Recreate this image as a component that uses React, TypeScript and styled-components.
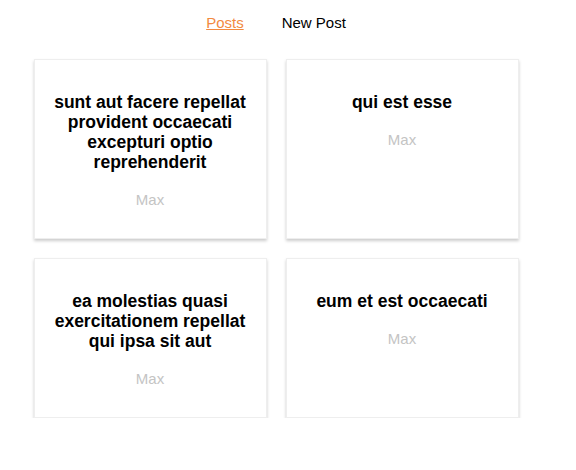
import React from "react";
import styled, { createGlobalStyle } from "styled-components";

const GlobalStyle = createGlobalStyle`
  html, body {
    margin: 0;
    padding: 0;
    background: #ffffff;
    font-family: "Liberation Sans", Arial, Helvetica, sans-serif;
  }
`;

const Page = styled.div`
  width: 552px;
`;

const StyledHeader = styled.header`
  padding-top: 14px;
  nav ul {
    margin: 0;
    padding: 0;
    list-style: none;
    display: flex;
    justify-content: center;
    gap: 38px;
  }
`;

const NavLink = styled.a<{ $active?: boolean }>`
  font-size: 15px;
  line-height: 18px;
  color: ${({ $active }) => ($active ? "#f28a3f" : "#000000")};
  text-decoration: ${({ $active }) => ($active ? "underline" : "none")};
  cursor: pointer;
`;

const PostGrid = styled.section`
  margin-top: 27px;
  display: grid;
  grid-template-columns: repeat(2, 233px);
  justify-content: center;
  column-gap: 19px;
  row-gap: 19px;
`;

const Card = styled.article`
  box-sizing: border-box;
  border: 1px solid #eeeeee;
  box-shadow: 0 2px 3px #cccccc;
  background: #ffffff;
  padding: 32px 12px 30px;
  text-align: center;
`;

const Title = styled.h2`
  margin: 0;
  font-size: 17.5px;
  line-height: 20px;
  font-weight: bold;
  color: #000000;
`;

const Author = styled.p`
  margin: 19px 0 0;
  font-size: 15px;
  color: #c4c4c4;
`;

const posts = [
  { id: 1, title: "sunt aut facere repellat provident occaecati excepturi optio reprehenderit" },
  { id: 2, title: "qui est esse" },
  { id: 3, title: "ea molestias quasi exercitationem repellat qui ipsa sit aut" },
  { id: 4, title: "eum et est occaecati" },
];

const App = () => {
  return (
    <Page>
      <GlobalStyle />
      <StyledHeader>
        <nav>
          <ul>
            <li>
              <NavLink $active>Posts</NavLink>
            </li>
            <li>
              <NavLink>New Post</NavLink>
            </li>
          </ul>
        </nav>
      </StyledHeader>
      <PostGrid>
        {posts.map((post) => (
          <Card key={post.id}>
            <Title>{post.title}</Title>
            <Author>Max</Author>
          </Card>
        ))}
      </PostGrid>
    </Page>
  );
};

export default App;
